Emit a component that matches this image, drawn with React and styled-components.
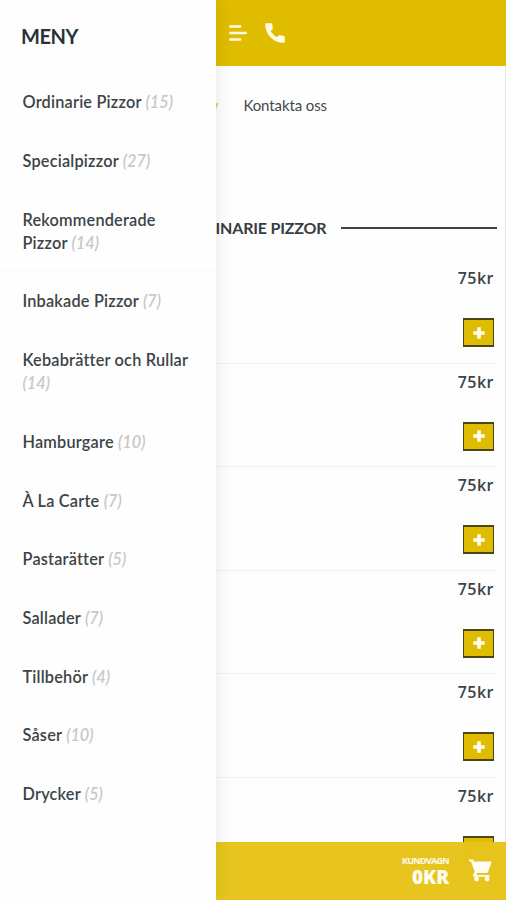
import React from 'react';
import styled, { createGlobalStyle } from 'styled-components';


const GlobalStyle = createGlobalStyle`
  * {
    box-sizing: border-box;
  }
  body {
    margin: 0;
    overflow: hidden;
    font-family: Lato, "Open Sans", sans-serif;
    color: #3c4448;
  }
`;

const Page = styled.div`
  position: relative;
  display: flex;
  flex-direction: column;
  height: 900px;
  overflow: hidden;
  background: #fefefe;
`;

const TopBar = styled.header`
  flex: none;
  display: flex;
  align-items: center;
  gap: 15px;
  height: 65.5px;
  padding-left: 229px;
  color: #fffbe8;
  background: #dfbc00;

  svg {
    display: block;
  }
`;

const Content = styled.main`
  flex: 1;
  min-height: 0;
  padding: 0 8px 0 10px;
  border-right: 1px solid #e4e4e4;
`;

const Tabs = styled.nav`
  display: flex;
  justify-content: flex-end;
  gap: 25px;
  padding: 29px 170px 0 0;
`;

const Tab = styled.a`
  font-size: 15px;
  line-height: 20px;
  letter-spacing: ${props => props.$active ? '0' : '-0.1px'};
  color: ${props => props.$active ? '#e2c12a' : '#444a4c'};
`;

const Heading = styled.h2`
  display: flex;
  align-items: center;
  gap: 15px;
  height: 24px;
  margin: 101px 0 0;
  font-size: 16px;
  font-weight: 700;
  letter-spacing: -0.2px;
  white-space: nowrap;
  color: #353d42;

  &:before,
  &:after {
    content: "";
    flex: 1;
    height: 2px;
    background: #3d4448;
  }
`;

const Product = styled.article`
  display: flex;
  flex-direction: column;
  align-items: flex-end;
  justify-content: space-between;
  height: 103.6px;
  padding: 8px 3px 15.5px 0;
  border-bottom: 1px solid #f1f1f1;
`;

const Products = styled.section`
  padding-top: 20.5px;
`;

const Price = styled.span`
  font-family: "Open Sans", sans-serif;
  font-size: 16px;
  font-weight: 600;
  line-height: 20px;
  letter-spacing: 0.5px;
`;

const AddButton = styled.button`
  display: flex;
  align-items: center;
  justify-content: center;
  width: 31px;
  height: 29px;
  padding: 0;
  color: #fffdf0;
  background: #dfbc00;
  border: 1.5px solid #4a4416;
  border-width: 2px 1px;
`;

const CartBar = styled.footer`
  position: absolute;
  right: 0;
  bottom: 0;
  left: 0;
  display: flex;
  align-items: center;
  justify-content: flex-end;
  gap: 20px;
  height: 58.5px;
  padding-right: 13px;
  color: #fffdf2;
  background: rgba(231, 196, 27, 0.99);
`;

const CartText = styled.div`
  display: flex;
  flex-direction: column;
  align-items: flex-end;
  padding-top: 2px;
  font-family: "Open Sans", sans-serif;
  text-transform: uppercase;
`;

const CartLabel = styled.span`
  margin-right: -1px;
  font-size: 9px;
  font-weight: 700;
  line-height: 10px;
  letter-spacing: -0.7px;
`;

const CartTotal = styled.span`
  margin-right: -1px;
  font-size: 19px;
  font-weight: 800;
  line-height: 22px;
`;

const Drawer = styled.aside`
  position: absolute;
  top: 0;
  bottom: 0;
  left: 0;
  width: 216px;
  background: #fefefe;
  box-shadow: 0 0 16px rgba(0, 0, 0, 0.1);
`;

const DrawerTitle = styled.h1`
  height: 72.7px;
  margin: 0;
  padding: 24px 0 0 21px;
  font-size: 20px;
  font-weight: 700;
  line-height: 24px;
  letter-spacing: -0.4px;
  color: #283238;
`;

const Categories = styled.ul`
  margin: 0;
  padding: 0;
  list-style: none;
`;

const Category = styled.li`
  padding: 17.7px 22px 17px 22.5px;
  font-size: 16.3px;
  font-weight: 600;
  line-height: 23px;
  letter-spacing: 0.2px;
  border-bottom: 1px solid #fafafa;
`;

const Count = styled.em`
  letter-spacing: 0;
  color: #c8c8c8;
`;


const categories = [
  ['Ordinarie Pizzor', 15],
  ['Specialpizzor', 27],
  ['Rekommenderade Pizzor', 14],
  ['Inbakade Pizzor', 7],
  ['Kebabrätter och Rullar', 14],
  ['Hamburgare', 10],
  ['À La Carte', 7],
  ['Pastarätter', 5],
  ['Sallader', 7],
  ['Tillbehör', 4],
  ['Såser', 10],
  ['Drycker', 5],
];

const prices = [75, 75, 75, 75, 75, 75];

const MenuIcon = () => (
  <svg width="18" height="18" viewBox="0 0 18 18" fill="none" stroke="currentColor" strokeWidth="2.4" strokeLinecap="round">
    <path d="M1.2 2.5h10M1.2 9h15.6M1.2 15.5h10" />
  </svg>
);

const PhoneIcon = () => (
  <svg width="26" height="26" viewBox="0 0 24 24" fill="currentColor">
    <path d="M3.8 3h4.5c.7 0 1.2.5 1.2 1.1 0 1.1.2 2.1.5 3 .2.6 0 1-.4 1.4L8 10.1c1.4 2.5 3.2 4.4 5.8 5.8l1.8-1.6c.4-.4.9-.5 1.4-.3 1 .3 2 .5 3 .5.6 0 1 .5 1 1.1v4.2c0 .7-.5 1.2-1.1 1.2C10.7 21 3 13.5 3 4.1 3 3.5 3.3 3 3.8 3z" />
  </svg>
);

const CartIcon = () => (
  <svg width="25" height="25" viewBox="0 0 25 25" fill="currentColor">
    <path d="M1 1.5h3.9l1.2 2.1h16.7c.6 0 .9.5.7 1l-3.5 9.4c-.2.6-.7 1-1.4 1H9.2l-1 1.9h13.3v1.9H6.5c-1.5 0-2-1.2-1.3-2.3l1.6-2.6L3 3.5H1z" />
    <circle cx="8.5" cy="21" r="2.4" />
    <circle cx="19" cy="21" r="2.4" />
  </svg>
);

const PlusIcon = () => (
  <svg width="12" height="12" viewBox="0 0 12 12" fill="none" stroke="currentColor" strokeWidth="3.6">
    <path d="M6 .3v11.4M.3 6h11.4" />
  </svg>
);

const App = () => (
  <>
    <GlobalStyle />
    <Page>
      <TopBar>
        <MenuIcon />
        <PhoneIcon />
      </TopBar>
      <Content>
        <Tabs>
          <Tab $active>Meny</Tab>
          <Tab>Kontakta oss</Tab>
        </Tabs>
        <Heading>ORDINARIE PIZZOR</Heading>
        <Products>
          {prices.map((price, i) => (
            <Product key={i}>
              <Price>{price}kr</Price>
              <AddButton><PlusIcon /></AddButton>
            </Product>
          ))}
        </Products>
      </Content>
      <CartBar>
        <CartText>
          <CartLabel>Kundvagn</CartLabel>
          <CartTotal>0kr</CartTotal>
        </CartText>
        <CartIcon />
      </CartBar>
      <Drawer>
        <DrawerTitle>MENY</DrawerTitle>
        <Categories>
          {categories.map(([name, count]) => (
            <Category key={name}>{name} <Count>({count})</Count></Category>
          ))}
        </Categories>
      </Drawer>
    </Page>
  </>
);

export default App;
